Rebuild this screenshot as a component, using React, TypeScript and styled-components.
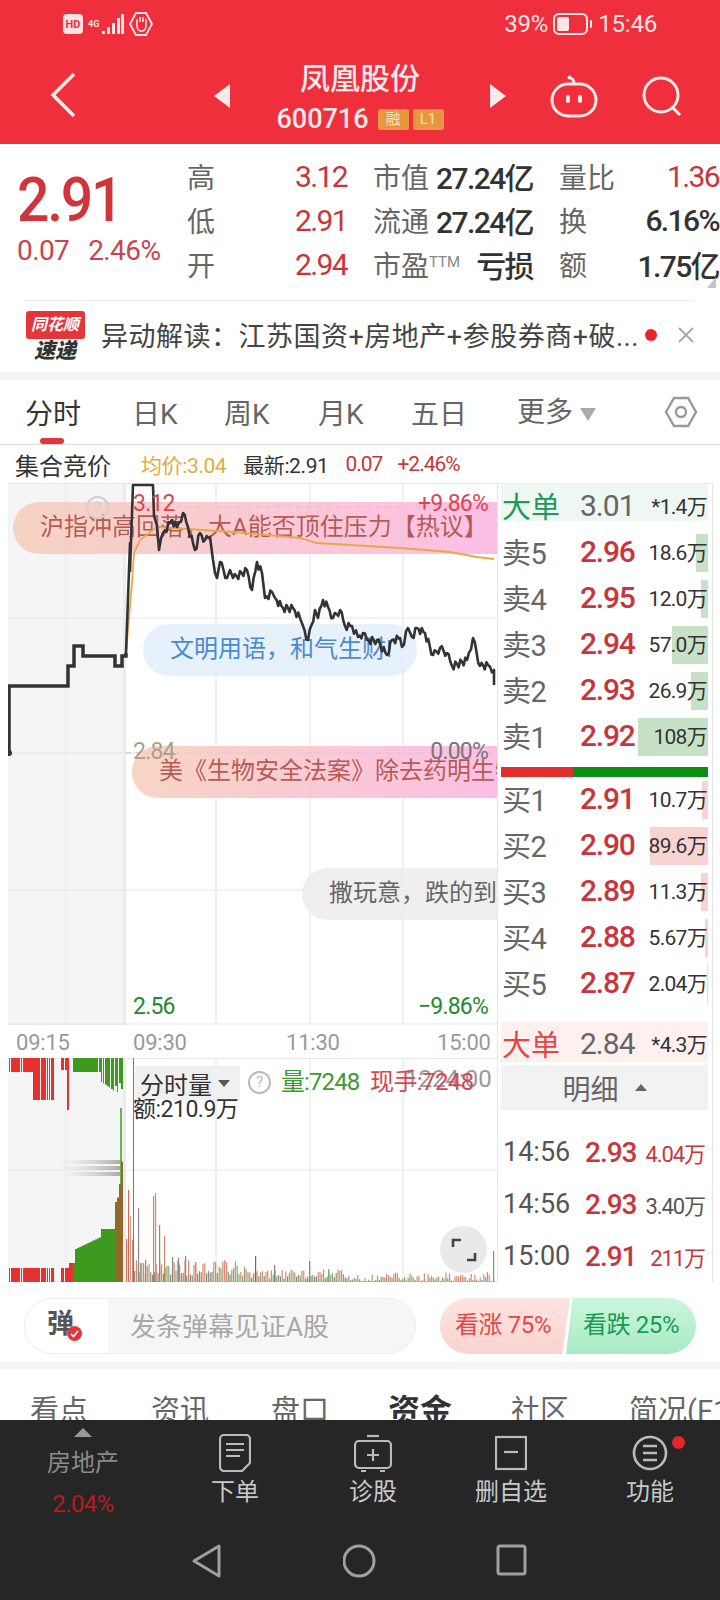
import React from 'react';
import styled, { createGlobalStyle } from 'styled-components';

const FONT = `Roboto, "Noto Sans CJK SC", sans-serif`;
const RED = '#c9353d';
const GREEN = '#1f8a2e';

const GlobalStyle = createGlobalStyle`
  html, body { margin: 0; padding: 0; background: #fff; }
  * { box-sizing: border-box; }
  body { font-family: ${FONT}; }
`;

const Page = styled.div`
  width: 720px;
  height: 1600px;
  overflow: hidden;
  display: flex;
  flex-direction: column;
  background: #fff;
`;

const Header = styled.header`
  height: 144px;
  background: #ef2f3c;
  color: #fff;
  flex: none;
`;

const StatusBar = styled.div`
  height: 48px;
  display: flex;
  align-items: center;
  justify-content: space-between;
  padding: 0 63px;
`;

const StatusGroup = styled.div`
  display: flex;
  align-items: center;
  gap: 5px;
`;

const HdBadge = styled.span`
  width: 20px;
  height: 20px;
  border-radius: 4px;
  background: #fbe3e4;
  color: #ef2f3c;
  font-size: 11px;
  font-weight: 700;
  display: flex;
  align-items: center;
  justify-content: center;
`;

const NetLabel = styled.span`
  font-size: 9px;
  font-weight: 700;
  line-height: 10px;
  width: 9px;
  color: #fde6e6;
`;

const StatusText = styled.span`
  font-size: 24px;
  letter-spacing: -0.2px;
  color: #fbe6e6;
`;

const NavBar = styled.div`
  height: 96px;
  display: grid;
  grid-template-columns: 214px 292px 214px;
`;

const BackCell = styled.div`
  padding: 24px 0 0 50px;
`;

const TitleCell = styled.div`
  display: flex;
  align-items: center;
  justify-content: space-between;
`;

const TitleStack = styled.div`
  display: flex;
  flex-direction: column;
  align-items: center;
  padding-top: 1px;
`;

const StockName = styled.div`
  font-size: 30px;
  line-height: 40px;
  font-weight: 500;
  color: #fbeaea;
`;

const CodeRow = styled.div`
  display: flex;
  align-items: center;
  gap: 9px;
  margin-top: 5px;
`;

const StockCode = styled.span`
  font-size: 27px;
  line-height: 30px;
  font-weight: 500;
  letter-spacing: 0;
  color: #fbeaea;
`;

const Tag = styled.span`
  width: 31px;
  height: 21px;
  margin-left: ${(p) => (p.$tight ? '-5px' : '0')};
  background: #e8963f;
  color: #fbe2b8;
  border-radius: 2px;
  font-size: 15px;
  line-height: 21px;
  text-align: center;
`;

const ActionCell = styled.div`
  display: flex;
  align-items: center;
  gap: 43px;
  padding-left: 44px;
`;

const QuoteSection = styled.section`
  height: 156px;
  flex: none;
  display: flex;
  padding-top: 10px;
  position: relative;
`;

const PriceBlock = styled.div`
  width: 187px;
  padding: 14px 0 0 17px;
`;

const BigPrice = styled.div`
  font-size: 62px;
  line-height: 64px;
  font-weight: 500;
  letter-spacing: -2.4px;
  color: #d0353b;
  transform: scaleX(0.92);
  transform-origin: left center;
`;

const PriceDelta = styled.div`
  display: flex;
  gap: 19px;
  margin-top: 3px;
  font-size: 28px;
  line-height: 32px;
  letter-spacing: -0.6px;
  color: #c9454b;
  white-space: nowrap;
`;

const QuoteGrid = styled.div`
  display: grid;
  grid-template-columns: repeat(3, 160px);
  grid-auto-rows: 44px;
  column-gap: 26px;
`;

const QuoteCell = styled.div`
  display: flex;
  align-items: center;
  justify-content: space-between;
  white-space: nowrap;
`;

const QuoteLabel = styled.span`
  font-size: 28px;
  color: #666;
`;

const Sup = styled.span`
  font-size: 15px;
  vertical-align: 9px;
  color: #888;
`;

const QuoteValue = styled.span`
  font-size: 30px;
  font-weight: ${(p) => (p.$color ? 400 : 500)};
  letter-spacing: -1.6px;
  color: ${(p) => p.$color || '#333'};
`;

const CornerMark = styled.div`
  position: absolute;
  right: 4px;
  bottom: 12px;
  width: 0;
  height: 0;
  border-left: 9px solid transparent;
  border-bottom: 11px solid #c4c4c4;
`;

const Divider = styled.div`
  height: 1px;
  flex: none;
  margin: 0 25px 0 24px;
  background: #eee;
`;

const NoticeRow = styled.div`
  height: 71px;
  flex: none;
  display: flex;
  align-items: center;
  padding-left: 25px;
`;

const Logo = styled.div`
  width: 60px;
  margin-right: 16px;
  display: flex;
  flex-direction: column;
  align-items: center;
`;

const LogoTop = styled.div`
  width: 59px;
  height: 28px;
  background: #e4353a;
  border-radius: 3px;
  color: #fff;
  font-size: 16px;
  font-weight: 700;
  font-style: italic;
  line-height: 28px;
  text-align: center;
  white-space: nowrap;
`;

const LogoBottom = styled.div`
  font-size: 21px;
  line-height: 24px;
  font-weight: 900;
  font-style: italic;
  color: #333;
`;

const NoticeText = styled.div`
  width: 540px;
  padding-bottom: 4px;
  font-size: 27px;
  letter-spacing: 0.5px;
  color: #444;
  white-space: nowrap;
  overflow: hidden;
`;

const NoticeDot = styled.span`
  width: 12px;
  height: 12px;
  border-radius: 50%;
  background: #e4252c;
  margin: 0 0 4px 4px;
`;

const NoticeClose = styled.div`
  margin-left: 20px;
`;

const Band = styled.div`
  flex: none;
  height: ${(p) => p.$h}px;
  background: #f5f5f5;
`;

const KTabs = styled.nav`
  height: 65px;
  flex: none;
  display: grid;
  grid-template-columns: 107px 92px 94px 93px 106px 147px 1fr;
  padding-left: 25px;
  align-items: center;
  border-bottom: 1px solid #ddd;
`;

const KTab = styled.div`
  font-size: 28px;
  line-height: 69px;
  height: 64px;
  color: ${(p) => (p.$active ? '#333' : '#666')};
  position: relative;
  white-space: nowrap;
  ${(p) => p.$active && `
    &::after {
      content: '';
      position: absolute;
      left: 15px;
      bottom: 0;
      width: 24px;
      height: 6px;
      border-radius: 3px;
      background: #e4353a;
    }
  `}
`;

const MoreTab = styled(KTab)`
  display: flex;
  align-items: center;
  gap: 7px;
`;

const MoreCaret = styled.span`
  width: 0;
  height: 0;
  margin-top: 4px;
  border-left: 8px solid transparent;
  border-right: 8px solid transparent;
  border-top: 13px solid #aaa;
`;

const InfoRow = styled.div`
  height: 38px;
  flex: none;
  display: flex;
  align-items: center;
  padding-left: 15px;
  white-space: nowrap;
`;

const InfoTitle = styled.span`
  width: 126px;
  font-size: 24px;
  color: #333;
`;

const InfoItem = styled.span`
  font-size: 21px;
  letter-spacing: ${(p) => (p.$narrow ? '-1px' : '-0.4px')};
  margin-right: ${(p) => p.$gap}px;
  color: ${(p) => p.$color};
`;

const Main = styled.div`
  height: 799px;
  flex: none;
  display: flex;
  padding-left: 8px;
`;

const ChartColumn = styled.div`
  width: 489px;
  flex: none;
`;

const PriceChart = styled.div`
  position: relative;
  height: 542px;
  overflow: hidden;
`;

const ChartSvg = styled.svg`
  position: absolute;
  left: 0;
  top: 0;
  display: block;
`;

const ChartLabel = styled.span`
  position: absolute;
  left: ${(p) => (p.$right ? 'auto' : '125px')};
  right: ${(p) => (p.$right ? '9px' : 'auto')};
  top: ${(p) => p.$top}px;
  font-size: 23px;
  line-height: 26px;
  letter-spacing: -0.8px;
  color: ${(p) => p.$color};
`;

const BulletPill = styled.div`
  position: absolute;
  left: ${(p) => p.$left}px;
  top: ${(p) => p.$top}px;
  right: ${(p) => (p.$w ? 'auto' : '0')};
  width: ${(p) => (p.$w ? `${p.$w}px` : 'auto')};
  height: 52px;
  padding-left: 27px;
  font-size: 24px;
  line-height: 50px;
  white-space: nowrap;
  overflow: hidden;
  border-radius: ${(p) => (p.$w ? '26px' : '26px 0 0 26px')};
  background: ${(p) =>
    p.$tone === 'hot'
      ? 'linear-gradient(90deg, rgba(246,205,185,.85), rgba(251,180,225,.85))'
      : p.$tone === 'blue'
        ? 'rgba(226,238,250,.85)'
        : 'rgba(236,236,236,.85)'};
  color: ${(p) => (p.$tone === 'hot' ? 'rgba(176,84,76,.95)' : p.$tone === 'blue' ? '#4a8ad0' : '#666')};
`;

const HelpDot = styled.span`
  position: absolute;
  left: ${(p) => p.$left}px;
  top: ${(p) => p.$top}px;
  width: 23px;
  height: 23px;
  border: 2px solid ${(p) => p.$color};
  border-radius: 50%;
  color: ${(p) => p.$color};
  font-size: 15px;
  line-height: 19px;
  text-align: center;
`;

const TimeAxis = styled.div`
  height: 33px;
  display: grid;
  grid-template-columns: 117px 153px 151px 1fr;
  padding-left: 8px;
  font-size: 22px;
  line-height: 36px;
  letter-spacing: -0.2px;
  color: #999;
`;

const VolumeChart = styled.div`
  position: relative;
  height: 224px;
  overflow: hidden;
`;

const VolumeSelect = styled.div`
  position: absolute;
  left: 127px;
  top: 8px;
  width: 105px;
  height: 34px;
  background: #f0f0f0;
  display: flex;
  align-items: center;
  gap: 6px;
  padding-left: 5px;
  font-size: 24px;
  color: #333;
`;

const Caret = styled.span`
  width: 0;
  height: 0;
  border-left: 6px solid transparent;
  border-right: 6px solid transparent;
  border-top: 7px solid #555;
`;

const VolumeText = styled.span`
  position: absolute;
  left: ${(p) => p.$left}px;
  top: ${(p) => p.$top}px;
  font-size: ${(p) => p.$size || 24}px;
  line-height: 30px;
  letter-spacing: ${(p) => p.$ls || 0}px;
  white-space: nowrap;
  color: ${(p) => p.$color};
`;

const ExpandButton = styled.div`
  position: absolute;
  left: 432px;
  top: 168px;
  width: 47px;
  height: 47px;
  border-radius: 50%;
  background: #e9e9e9;
  display: flex;
  align-items: center;
  justify-content: center;
`;

const BookPanel = styled.aside`
  width: 216px;
  height: 799px;
  flex: none;
  overflow: hidden;
  padding: 0 4px 0 3px;
  border-left: 1px solid #e6e6e6;
  border-right: 1px solid #e6e6e6;
  border-top: 1px solid #eee;
`;

const BigOrder = styled.div`
  height: ${(p) => (p.$up ? 40 : 37)}px;
  display: grid;
  grid-template-columns: 78px 1fr auto;
  align-items: center;
  padding: 0 1px 4px 1px;
  background: ${(p) => (p.$up ? '#fdf0ef' : '#eef7f2')};
  margin-top: ${(p) => p.$mt || 0}px;
  white-space: nowrap;
`;

const BigLabel = styled.span`
  font-size: 29px;
  color: ${(p) => (p.$up ? '#e8453f' : '#1d9a58')};
`;

const GreyPrice = styled.span`
  font-size: 30px;
  letter-spacing: -1px;
  color: #666;
`;

const BookVol = styled.span`
  position: relative;
  font-size: 21px;
  letter-spacing: -0.7px;
  color: #333;
`;

const BookRows = styled.div`
  margin-top: ${(p) => p.$mt}px;
`;

const BookRow = styled.div`
  position: relative;
  height: 46px;
  display: grid;
  grid-template-columns: 78px 1fr auto;
  align-items: center;
  padding: 0 1px 4px 1px;
  white-space: nowrap;
`;

const DepthBar = styled.span`
  position: absolute;
  right: 0;
  top: 4px;
  bottom: 4px;
  background: ${(p) => (p.$sell ? '#c7e1c7' : '#f9d2d2')};
`;

const RowLabel = styled.span`
  position: relative;
  font-size: 29px;
  letter-spacing: -0.5px;
  color: #666;
`;

const RowPrice = styled.span`
  position: relative;
  font-size: 30px;
  font-weight: 500;
  letter-spacing: -1.2px;
  color: ${RED};
`;

const ImbalanceBar = styled.div`
  height: 10px;
  margin-top: 7px;
  display: flex;
`;

const ImbalancePart = styled.span`
  background: ${(p) => p.$color};
  width: ${(p) => p.$w}px;
`;

const DetailToggle = styled.div`
  height: 45px;
  margin-top: 3px;
  background: #f2f2f2;
  display: flex;
  align-items: center;
  justify-content: center;
  gap: 16px;
  font-size: 28px;
  color: #666;
`;

const UpCaret = styled.span`
  width: 0;
  height: 0;
  border-left: ${(p) => (p.$big ? 9 : 6)}px solid transparent;
  border-right: ${(p) => (p.$big ? 9 : 6)}px solid transparent;
  border-bottom: ${(p) => (p.$big ? 9 : 7)}px solid ${(p) => (p.$big ? '#999' : '#666')};
`;

const TickList = styled.div`
  margin-top: 16px;
`;

const TickRow = styled.div`
  height: 52px;
  display: grid;
  grid-template-columns: 82px 1fr auto;
  align-items: center;
  padding: 0 3px 0 2px;
  white-space: nowrap;
`;

const TickTime = styled.span`
  font-size: 27px;
  color: #555;
`;

const TickPrice = styled.span`
  font-size: 28px;
  font-weight: 500;
  letter-spacing: -1px;
  color: ${RED};
`;

const TickVol = styled.span`
  font-size: 22px;
  letter-spacing: -1.1px;
  color: ${(p) => p.$color};
`;

const DanmakuBar = styled.div`
  height: 80px;
  flex: none;
  display: flex;
  padding: 16px 0 8px 24px;
`;

const DanmakuInput = styled.div`
  width: 392px;
  height: 56px;
  border: 1px solid #eee;
  border-radius: 28px;
  overflow: hidden;
  display: flex;
  background: #f6f6f6;
`;

const DanmakuBadge = styled.div`
  position: relative;
  width: 83px;
  background: #fff;
  padding-left: 22px;
  font-size: 27px;
  font-weight: 700;
  line-height: 50px;
  color: #555;
`;

const CheckDot = styled.span`
  position: absolute;
  left: 42px;
  top: 27px;
  width: 15px;
  height: 15px;
  border-radius: 50%;
  background: #e4353a;
  display: flex;
  align-items: center;
  justify-content: center;
`;

const Placeholder = styled.div`
  padding-left: 22px;
  font-size: 26px;
  line-height: 57px;
  color: #a8a8a8;
`;

const VotePair = styled.div`
  display: flex;
  margin-left: 24px;
`;

const VoteUp = styled.div`
  width: 130px;
  height: 56px;
  border-radius: 28px 0 0 28px;
  clip-path: polygon(0 0, 100% 0, 94% 100%, 0 100%);
  background: linear-gradient(180deg, #fde4e2, #fbd3cf);
  color: #df4a48;
  font-size: 24px;
  line-height: 54px;
  padding-left: 15px;
  letter-spacing: -0.4px;
  white-space: nowrap;
`;

const VoteDown = styled.div`
  width: 130px;
  height: 56px;
  margin-left: -4px;
  border-radius: 0 28px 28px 0;
  clip-path: polygon(5% 0, 100% 0, 100% 100%, 0 100%);
  background: linear-gradient(180deg, #ccf6dc, #a9eac3);
  color: #179a58;
  font-size: 24px;
  line-height: 54px;
  padding-left: 17px;
  letter-spacing: -0.4px;
  white-space: nowrap;
`;

const SectionTabs = styled.nav`
  height: 51px;
  flex: none;
  overflow: hidden;
  display: grid;
  grid-template-columns: 121px 120px 117px 123px 118px 1fr;
  padding-left: 30px;
  white-space: nowrap;
`;

const SectionTab = styled.div`
  font-size: ${(p) => (p.$active ? 32 : 29)}px;
  font-weight: ${(p) => (p.$active ? 700 : 400)};
  line-height: 84px;
  color: ${(p) => (p.$active ? '#333' : '#666')};
`;

const Dock = styled.footer`
  height: 180px;
  flex: none;
  background: #262626;
`;

const DockRow = styled.div`
  height: 107px;
  display: grid;
  grid-template-columns: 166px 138px 138px 138px 140px;
`;

const SectorItem = styled.div`
  display: flex;
  flex-direction: column;
  align-items: center;
  padding-top: 8px;
`;

const SectorName = styled.div`
  margin-top: 11px;
  font-size: 24px;
  line-height: 30px;
  color: #8a8a8a;
`;

const SectorPct = styled.div`
  margin-top: 11px;
  font-size: 24px;
  line-height: 30px;
  letter-spacing: -0.6px;
  color: #b71c1c;
`;

const DockItem = styled.div`
  position: relative;
  display: flex;
  flex-direction: column;
  align-items: center;
  padding-top: 14px;
  font-size: 24px;
  line-height: 30px;
  color: #c9c9c9;
`;

const DockIcon = styled.div`
  height: 42px;
  margin-bottom: 1px;
`;

const DockDot = styled.span`
  position: absolute;
  left: 92px;
  top: 16px;
  width: 13px;
  height: 13px;
  border-radius: 50%;
  background: #e4252c;
`;

const SystemNav = styled.div`
  height: 73px;
  display: grid;
  grid-template-columns: 191px 152px 153px 1fr;
  padding-top: 16px;
`;

// price line points, traced from the chart (local px)
const STEP_LINE = [
  [1, 270], [1, 203], [60, 203], [60, 183], [66, 183], [66, 163], [75, 163], [75, 173],
  [107, 173], [107, 183], [114, 183], [114, 173], [118, 173], [118, 170],
];

const PRICE_LINE = [
  [122, 60], [122, 88], [125, 2], [145, 2], [146, 33], [149, 43], [151, 67], [155, 50],
  [164, 37], [169, 44], [175, 30], [180, 44], [187, 67], [192, 50], [197, 57], [202, 54],
  [205, 77], [209, 95], [212, 79], [219, 95], [222, 87], [225, 95], [239, 87], [244, 107],
  [249, 79], [254, 90], [257, 115], [264, 109], [267, 115], [275, 125], [285, 125],
  [292, 135], [295, 143], [300, 157], [307, 127], [310, 135], [315, 117], [320, 124],
  [325, 135], [332, 127], [337, 143], [344, 143], [350, 154], [355, 150], [359, 157],
  [369, 157], [379, 172], [384, 157], [392, 155], [394, 164], [400, 145], [404, 154],
  [409, 145], [417, 150], [425, 172], [432, 165], [439, 170], [444, 183], [459, 177],
  [465, 155], [472, 183], [480, 182], [486, 187], [486, 202],
];

const AVG_LINE = [
  [118, 170], [124, 100], [126, 70], [132, 57], [149, 44], [225, 49], [292, 55], [309, 60],
  [392, 65], [442, 69], [469, 74], [486, 76],
];

const toPath = (pts: number[][]) => pts.map((p, i) => `${i ? 'L' : 'M'}${p[0]} ${p[1]}`).join(' ');

const jitterLine = (pts: number[][]) => {
  const out: number[][] = [];
  let n = 0;
  pts.forEach((p, i) => {
    if (i > 4 && p[0] - pts[i - 1][0] > 3) {
      const prev = pts[i - 1];
      const steps = Math.floor((p[0] - prev[0]) / 1.6);
      for (let s = 1; s < steps; s++) {
        n++;
        const t = s / steps;
        const wobble = n % 3 === 0 ? 4 : n % 3 === 1 ? -3 : 0;
        out.push([prev[0] + (p[0] - prev[0]) * t, prev[1] + (p[1] - prev[1]) * t + wobble]);
      }
    }
    out.push(p);
  });
  return out;
};

const seed = (i: number) => {
  const v = Math.sin(i * 12.9898) * 43758.5453;
  return v - Math.floor(v);
};

const VOL_PEAKS: [number, number, string][] = [
  [118, 181, '#d9705f'], [120, 132, '#c96a5a'], [122, 158, '#d9a08a'], [124, 182, '#e08a70'],
  [130, 150, '#888'], [132, 205, '#999'], [137, 202, '#888'], [145, 138, '#c8845e'],
  [147, 135, '#d09070'], [151, 167, '#5da850'], [156, 178, '#c9885e'], [164, 199, '#888'],
  [170, 200, '#888'], [177, 198, '#888'], [187, 204, '#c9885e'], [247, 198, '#b0505a'],
  [301, 203, '#c96a5a'], [236, 209, '#7aa87a'], [266, 207, '#7a8a7a'], [320, 211, '#7aa87a'],
  [485, 193, '#5da850'],
];

const volBars = () => {
  const bars: { x: number; y: number; c: string }[] = [];
  for (let x = 126; x < 484; x += 1.8) {
    const r = seed(x);
    const h = x < 230 ? 6 + r * 16 : x < 340 ? 3 + r * 10 : 1 + r * r * 9;
    const c = r > 0.66 ? '#d88a70' : r > 0.33 ? '#86a86a' : '#8a8a80';
    bars.push({ x, y: 224 - h, c });
  }
  VOL_PEAKS.forEach(([x, y, c]) => bars.push({ x, y, c }));
  return bars;
};

const callTopHeight = (x: number) => {
  if (x < 24) return 14;
  if (x < 47) return 42;
  if (x < 53) return 0;
  if (x < 58) return 12;
  if (x < 60) return 52;
  if (x < 65) return 0;
  if (x < 93) return 14;
  if (x < 107) return 24 + (x - 93) * 0.7;
  return 22 + (x % 5) * 3;
};

const callBottomHeight = (x: number) => {
  if (x < 47) return 14;
  if (x < 53) return 0;
  if (x < 60) return 14;
  if (x < 67) return 19;
  if (x < 92) return 33 + (x - 67) * 0.48;
  if (x < 107) return 53;
  return 80 + Math.pow((x - 107) / 7, 2) * 55;
};

const callBars = () => {
  const top: React.ReactNode[] = [];
  const bottom: React.ReactNode[] = [];
  for (let x = 1; x < 115; x += 2) {
    const width = seed(x) > 0.72 ? 1 : 2;
    const color = x < 65 ? '#e6322e' : '#3d9a1f';
    const th = callTopHeight(x);
    if (th > 0) top.push(<rect key={x} x={x} y={0} width={width} height={th} fill={color} />);
    const bh = callBottomHeight(x);
    if (bh > 0) bottom.push(<rect key={`b${x}`} x={x} y={224 - bh} width={x >= 67 ? 2 : width} height={bh} fill={x >= 107 ? '#8f6a2a' : color} />);
  }
  return [top, bottom];
};

const SELL = [
  { label: '卖5', price: '2.96', vol: '18.6万', w: 12 },
  { label: '卖4', price: '2.95', vol: '12.0万', w: 7 },
  { label: '卖3', price: '2.94', vol: '57.0万', w: 36 },
  { label: '卖2', price: '2.93', vol: '26.9万', w: 17 },
  { label: '卖1', price: '2.92', vol: '108万', w: 70 },
];

const BUY = [
  { label: '买1', price: '2.91', vol: '10.7万', w: 6 },
  { label: '买2', price: '2.90', vol: '89.6万', w: 58 },
  { label: '买3', price: '2.89', vol: '11.3万', w: 7 },
  { label: '买4', price: '2.88', vol: '5.67万', w: 3 },
  { label: '买5', price: '2.87', vol: '2.04万', w: 1 },
];

const TICKS = [
  { time: '14:56', price: '2.93', vol: '4.04万', color: RED },
  { time: '14:56', price: '2.93', vol: '3.40万', color: '#555' },
  { time: '15:00', price: '2.91', vol: '211万', color: RED },
];

const QUOTES: { label: React.ReactNode; value: string; color?: string }[] = [
  { label: '高', value: '3.12', color: RED },
  { label: '市值', value: '27.24亿' },
  { label: '量比', value: '1.36', color: RED },
  { label: '低', value: '2.91', color: RED },
  { label: '流通', value: '27.24亿' },
  { label: '换', value: '6.16%' },
  { label: '开', value: '2.94', color: RED },
  { label: <>市盈<Sup>TTM</Sup></>, value: '亏损' },
  { label: '额', value: '1.75亿' },
];

const GridLines = ({ w, h, rows }: { w: number; h: number; rows: number[] }) => (
  <>
    <rect x={0} y={0} width={117} height={h} fill="#f5f5f5" />
    <rect x={115} y={0} width={3} height={h} fill="#ececec" />
    {[58, 208, 302, 395].map((x) => (
      <line key={x} x1={x} x2={x} y1={0} y2={h} stroke="#ebebeb" strokeWidth={1.5} />
    ))}
    {rows.map((y) => (
      <line key={y} x1={0} x2={w} y1={y} y2={y} stroke="#e6e6e6" strokeWidth={1.2} />
    ))}
  </>
);

const App = () => {
  const [callTop, callBottom] = callBars();
  return (
    <Page>
      <GlobalStyle />
      <Header>
        <StatusBar>
          <StatusGroup>
            <HdBadge>HD</HdBadge>
            <NetLabel>4G</NetLabel>
            <svg width="22" height="24" viewBox="0 0 22 24" fill="#fde6e6">
              <rect x="0" y="19" width="3" height="3" />
              <rect x="5" y="15" width="3" height="7" />
              <rect x="10" y="11" width="3" height="11" />
              <rect x="15" y="6" width="3" height="16" />
              <rect x="19" y="2" width="3" height="20" />
            </svg>
            <svg width="24" height="26" viewBox="0 0 24 26" fill="none" stroke="#fde6e6" strokeWidth="1.8">
              <path d="M7 2h10l6 11-6 11H7L1 13z" />
              <path d="M8 12V8m3 3V6m3 5V6m3 6V8M8 12v3c0 3 2 5 4.500 5S17 18 17 15v-3" strokeWidth="1.6" />
            </svg>
          </StatusGroup>
          <StatusGroup>
            <StatusText>39%</StatusText>
            <svg width="40" height="24" viewBox="0 0 40 24" fill="none">
              <rect x="1" y="2" width="33" height="20" rx="5" stroke="#fde6e6" strokeWidth="2" />
              <rect x="4" y="5" width="12" height="14" rx="2" fill="#fde6e6" />
              <rect x="37" y="8" width="2" height="8" rx="1" fill="#fde6e6" />
            </svg>
            <StatusText>15:46</StatusText>
          </StatusGroup>
        </StatusBar>
        <NavBar>
          <BackCell>
            <svg width="27" height="46" viewBox="0 0 27 46" fill="none" stroke="#fbeaea" strokeWidth="3.6">
              <path d="M24 2 3 23l21 21" />
            </svg>
          </BackCell>
          <TitleCell>
            <svg width="16" height="24" viewBox="0 0 16 24" fill="#fbeaea"><path d="M16 0v24L0 12z" /></svg>
            <TitleStack>
              <StockName>凤凰股份</StockName>
              <CodeRow>
                <StockCode>600716</StockCode>
                <Tag>融</Tag>
                <Tag $tight>L1</Tag>
              </CodeRow>
            </TitleStack>
            <svg width="16" height="24" viewBox="0 0 16 24" fill="#fbeaea"><path d="M0 0v24l16-12z" /></svg>
          </TitleCell>
          <ActionCell>
            <svg width="48" height="44" viewBox="0 0 48 44" fill="none" stroke="#fbeaea" strokeWidth="3">
              <rect x="2" y="10" width="44" height="32" rx="16" />
              <path d="M24 10c0-3-1-5-3-6" />
              <circle cx="19.500" cy="3.500" r="2" fill="#fbeaea" stroke="none" />
              <rect x="16" y="21" width="4" height="8" rx="2" fill="#fbeaea" stroke="none" />
              <rect x="28" y="21" width="4" height="8" rx="2" fill="#fbeaea" stroke="none" />
            </svg>
            <svg width="42" height="42" viewBox="0 0 42 42" fill="none" stroke="#fbeaea" strokeWidth="3">
              <circle cx="20" cy="20" r="17" />
              <path d="m31 32 8 8" />
            </svg>
          </ActionCell>
        </NavBar>
      </Header>

      <QuoteSection>
        <PriceBlock>
          <BigPrice>2.91</BigPrice>
          <PriceDelta>
            <span>0.07</span>
            <span>2.46%</span>
          </PriceDelta>
        </PriceBlock>
        <QuoteGrid>
          {QUOTES.map((q, i) => (
            <QuoteCell key={i}>
              <QuoteLabel>{q.label}</QuoteLabel>
              <QuoteValue $color={q.color}>{q.value}</QuoteValue>
            </QuoteCell>
          ))}
        </QuoteGrid>
        <CornerMark />
      </QuoteSection>
      <Divider />
      <NoticeRow>
        <Logo>
          <LogoTop>同花顺</LogoTop>
          <LogoBottom>速递</LogoBottom>
        </Logo>
        <NoticeText>异动解读：江苏国资+房地产+参股券商+破...</NoticeText>
        <NoticeDot />
        <NoticeClose>
          <svg width="18" height="18" viewBox="0 0 18 18" stroke="#aaa" strokeWidth="2"><path d="m2 2 14 14M16 2 2 16" /></svg>
        </NoticeClose>
      </NoticeRow>
      <Band $h={8} />
      <KTabs>
        <KTab $active>分时</KTab>
        <KTab>日K</KTab>
        <KTab>周K</KTab>
        <KTab>月K</KTab>
        <KTab>五日</KTab>
        <MoreTab>更多<MoreCaret /></MoreTab>
        <svg width="34" height="34" viewBox="0 0 34 34" fill="none" stroke="#999" strokeWidth="2.4">
          <path d="M10 3h14l8 14-8 14H10L2 17z" />
          <circle cx="17" cy="17" r="5" />
        </svg>
      </KTabs>
      <InfoRow>
        <InfoTitle>集合竞价</InfoTitle>
        <InfoItem $gap={17} $color="#e3ac3a">均价:3.04</InfoItem>
        <InfoItem $gap={17} $color="#333">最新:2.91</InfoItem>
        <InfoItem $gap={15} $narrow $color={RED}>0.07</InfoItem>
        <InfoItem $gap={0} $narrow $color={RED}>+2.46%</InfoItem>
      </InfoRow>

      <Main>
        <ChartColumn>
          <PriceChart>
            <ChartSvg width="489" height="542" viewBox="0 0 489 542">
              <GridLines w={489} h={542} rows={[0.5, 135, 270, 407, 541]} />
              <line x1={118} x2={489} y1={24} y2={24} stroke="#e2737c" strokeWidth={1.2} strokeDasharray="5 5" />
              <line x1={118} x2={489} y1={270} y2={270} stroke="#bbb" strokeWidth={1.2} strokeDasharray="5 5" />
            </ChartSvg>
            <BulletPill $tone="hot" $left={5} $top={19}>沪指冲高回落，大A能否顶住压力【热议】</BulletPill>
            <BulletPill $tone="blue" $left={135} $top={141} $w={274}>文明用语，和气生财!</BulletPill>
            <BulletPill $tone="hot" $left={124} $top={263}>美《生物安全法案》除去药明生物</BulletPill>
            <BulletPill $tone="grey" $left={294} $top={385}>撒玩意，跌的到底</BulletPill>
            <ChartSvg width="489" height="542" viewBox="0 0 489 542">
              <path d={toPath(STEP_LINE)} fill="none" stroke="#333" strokeWidth={3.5} />
              <circle cx={1} cy={270} r={3} fill="#333" />
              <path d={toPath(AVG_LINE)} fill="none" stroke="#e8a848" strokeWidth={1.8} />
              <path d={`M118 170 L122 60 ${toPath(jitterLine(PRICE_LINE)).replace('M', 'L')}`} fill="none" stroke="#333" strokeWidth={2.6} strokeLinejoin="round" />
            </ChartSvg>
            <HelpDot $left={78} $top={13} $color="#d0d0d0">?</HelpDot>
            <ChartLabel $top={8} $color="#d8474f">3.12</ChartLabel>
            <ChartLabel $right $top={8} $color="#d8474f">+9.86%</ChartLabel>
            <ChartLabel $top={256} $color="#aaa08f">2.84</ChartLabel>
            <ChartLabel $right $top={256} $color="#777">0.00%</ChartLabel>
            <ChartLabel $top={511} $color={GREEN}>2.56</ChartLabel>
            <ChartLabel $right $top={511} $color={GREEN}>−9.86%</ChartLabel>
          </PriceChart>
          <TimeAxis>
            <span>09:15</span>
            <span>09:30</span>
            <span>11:30</span>
            <span>15:00</span>
          </TimeAxis>
          <VolumeChart>
            <ChartSvg width="489" height="224" viewBox="0 0 489 224">
              <defs>
                <linearGradient id="streak" x1="0" x2="1" y1="0" y2="0">
                  <stop offset="0" stopColor="#ccc" stopOpacity="0" />
                  <stop offset="1" stopColor="#999" stopOpacity="0.8" />
                </linearGradient>
              </defs>
              <GridLines w={489} h={224} rows={[0.5, 112, 223.5]} />
              {callTop}
              {callBottom}
              <line x1={113} x2={113} y1={50} y2={130} stroke="#3d9a1f" strokeWidth={1.5} />
              {volBars().map((b, i) => (
                <rect key={i} x={b.x} y={b.y} width={1.2} height={224 - b.y} fill={b.c} />
              ))}
              <line x1={125.500} x2={125.500} y1={0} y2={224} stroke="#c9555a" strokeWidth={1} />
              <rect x={52} y={102} width={60} height={4} fill="url(#streak)" />
              <rect x={52} y={108} width={60} height={4} fill="url(#streak)" />
              <rect x={52} y={114} width={60} height={4} fill="url(#streak)" />
            </ChartSvg>
            <VolumeText $left={397} $top={6} $color="#999">1224:00</VolumeText>
            <VolumeSelect>分时量<Caret /></VolumeSelect>
            <HelpDot $left={240} $top={13} $color="#bbb">?</HelpDot>
            <VolumeText $left={273} $top={9} $ls={-0.9} $color="#3d9a2f">量:7248</VolumeText>
            <VolumeText $left={362} $top={9} $ls={-0.6} $color="#d8474f">现手:7248</VolumeText>
            <VolumeText $left={125} $top={37} $size={23} $ls={-0.5} $color="#333">额:210.9万</VolumeText>
            <ExpandButton>
              <svg width="26" height="24" viewBox="0 0 26 24" fill="none" stroke="#444" strokeWidth="2.6">
                <path d="M2 9V2h8M24 15v7h-8" />
              </svg>
            </ExpandButton>
          </VolumeChart>
        </ChartColumn>

        <BookPanel>
          <BigOrder>
            <BigLabel>大单</BigLabel>
            <GreyPrice>3.01</GreyPrice>
            <BookVol>*1.4万</BookVol>
          </BigOrder>
          <BookRows $mt={9}>
            {SELL.map((r) => (
              <BookRow key={r.label}>
                <DepthBar $sell style={{ width: r.w }} />
                <RowLabel>{r.label}</RowLabel>
                <RowPrice>{r.price}</RowPrice>
                <BookVol>{r.vol}</BookVol>
              </BookRow>
            ))}
          </BookRows>
          <ImbalanceBar>
            <ImbalancePart $color="#e23030" $w={72} />
            <ImbalancePart $color="#0a8f14" $w={136} />
          </ImbalanceBar>
          <BookRows $mt={0}>
            {BUY.map((r) => (
              <BookRow key={r.label}>
                <DepthBar style={{ width: r.w }} />
                <RowLabel>{r.label}</RowLabel>
                <RowPrice>{r.price}</RowPrice>
                <BookVol>{r.vol}</BookVol>
              </BookRow>
            ))}
          </BookRows>
          <BigOrder $up $mt={15}>
            <BigLabel $up>大单</BigLabel>
            <GreyPrice>2.84</GreyPrice>
            <BookVol>*4.3万</BookVol>
          </BigOrder>
          <DetailToggle>明细<UpCaret /></DetailToggle>
          <TickList>
            {TICKS.map((t, i) => (
              <TickRow key={i}>
                <TickTime>{t.time}</TickTime>
                <TickPrice>{t.price}</TickPrice>
                <TickVol $color={t.color}>{t.vol}</TickVol>
              </TickRow>
            ))}
          </TickList>
        </BookPanel>
      </Main>

      <DanmakuBar>
        <DanmakuInput>
          <DanmakuBadge>
            弹
            <CheckDot>
              <svg width="9" height="8" viewBox="0 0 9 8" fill="none" stroke="#fff" strokeWidth="1.600"><path d="m1 4 2.500 2.500L8 1" /></svg>
            </CheckDot>
          </DanmakuBadge>
          <Placeholder>发条弹幕见证A股</Placeholder>
        </DanmakuInput>
        <VotePair>
          <VoteUp>看涨 75%</VoteUp>
          <VoteDown>看跌 25%</VoteDown>
        </VotePair>
      </DanmakuBar>
      <Band $h={7} />
      <SectionTabs>
        <SectionTab>看点</SectionTab>
        <SectionTab>资讯</SectionTab>
        <SectionTab>盘口</SectionTab>
        <SectionTab $active>资金</SectionTab>
        <SectionTab>社区</SectionTab>
        <SectionTab>简况(F10</SectionTab>
      </SectionTabs>

      <Dock>
        <DockRow>
          <SectorItem>
            <UpCaret $big />
            <SectorName>房地产</SectorName>
            <SectorPct>2.04%</SectorPct>
          </SectorItem>
          <DockItem>
            <DockIcon>
              <svg width="32" height="38" viewBox="0 0 32 38" fill="none" stroke="#bbb" strokeWidth="2.2">
                <path d="M5 1h22a4 4 0 0 1 4 4v24l-8 8H5a4 4 0 0 1-4-4V5a4 4 0 0 1 4-4z" />
                <path d="M7 10h18M7 16h18M7 22h14" />
              </svg>
            </DockIcon>
            下单
          </DockItem>
          <DockItem>
            <DockIcon>
              <svg width="38" height="38" viewBox="0 0 38 38" fill="none" stroke="#bbb" strokeWidth="2.2">
                <path d="M13 2h12" />
                <rect x="1" y="7" width="36" height="27" rx="4" />
                <path d="M7 37h5M26 37h5M19 15v12M13 21h12" />
              </svg>
            </DockIcon>
            诊股
          </DockItem>
          <DockItem>
            <DockIcon>
              <svg width="32" height="38" viewBox="0 0 32 38" fill="none" stroke="#bbb" strokeWidth="2.2">
                <rect x="1" y="3" width="30" height="32" />
                <path d="M9 18h14" />
              </svg>
            </DockIcon>
            删自选
          </DockItem>
          <DockItem>
            <DockIcon>
              <svg width="36" height="38" viewBox="0 0 36 38" fill="none" stroke="#bbb" strokeWidth="2.6">
                <circle cx="18" cy="19" r="16" />
                <path d="M11 12h14M11 19h14M11 26h14" />
              </svg>
            </DockIcon>
            <DockDot />
            功能
          </DockItem>
        </DockRow>
        <SystemNav>
          <span />
          <svg width="32" height="36" viewBox="0 0 32 36" fill="none" stroke="#a0a0a0" strokeWidth="3" strokeLinejoin="round"><path d="M28 3v30L3 18z" /></svg>
          <svg width="36" height="36" viewBox="0 0 36 36" fill="none" stroke="#a0a0a0" strokeWidth="3"><circle cx="16" cy="18" r="15" /></svg>
          <svg width="32" height="34" viewBox="0 0 32 34" fill="none" stroke="#a0a0a0" strokeWidth="3"><rect x="2" y="3" width="27" height="28" rx="2" /></svg>
        </SystemNav>
      </Dock>
    </Page>
  );
};

export default App;
